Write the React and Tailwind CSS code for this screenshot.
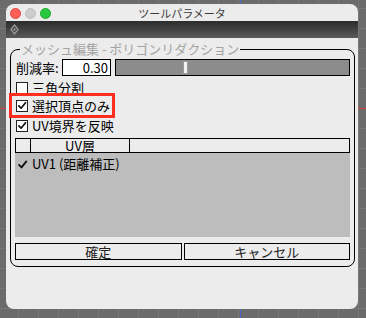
import React from "react";

const font = { fontFamily: '"Noto Sans CJK JP", "Noto Sans", sans-serif' };

const Check = ({ className = "" }) => (
  <svg viewBox="0 0 12 12" className={className}>
    <path d="M2.2 6.4 L4.9 9.2 L10.2 2.6" fill="none" stroke="#111" strokeWidth="2" strokeLinecap="round" strokeLinejoin="round" />
  </svg>
);

const CheckBox = ({ checked }) => (
  <div className="w-[12px] h-[12px] bg-white border border-[#222] flex items-center justify-center shrink-0">
    {checked && <Check className="w-[11px] h-[11px]" />}
  </div>
);

const CheckRow = ({ checked, label, className = "" }) => (
  <div className={`h-[17px] flex items-center gap-[4px] pl-[1px] ${className}`}>
    <CheckBox checked={checked} />
    <span className="text-[13px] leading-[17px] text-black">{label}</span>
  </div>
);

const App = () => {
  return (
    <div
      className="relative w-[366px] h-[318px] overflow-hidden bg-[#6b6b6b] bg-[linear-gradient(to_right,#777_1px,transparent_1px),linear-gradient(to_bottom,#777_1px,transparent_1px)] bg-[size:20px_20px] bg-[position:18px_8px] pt-[4px] pl-[6px]"
      style={font}
    >
      <div className="absolute left-0 top-[108px] w-full h-px bg-[#d04040]" />
      <div className="absolute top-0 left-[240px] h-full w-px bg-[#5060d0]" />

      <div className="relative w-[352px] h-[305px] rounded-[8px] bg-[#ececec] overflow-hidden flex flex-col">
        {/* title bar */}
        <div className="h-[17px] flex items-center relative">
          <div className="flex gap-[4px] pl-[4px] pt-[2px]">
            <div className="w-[11px] h-[11px] rounded-full bg-[#fe5f57] border border-[#e0443e]" />
            <div className="w-[11px] h-[11px] rounded-full bg-[#cdcdcd] border border-[#bdbdbd]" />
            <div className="w-[11px] h-[11px] rounded-full bg-[#28c840] border border-[#1aab29]" />
          </div>
          <div className="absolute inset-0 flex items-center justify-center pt-[2px] text-[11px] text-[#3a3a3a]">
            ツールパラメータ
          </div>
        </div>

        {/* dark toolbar */}
        <div className="h-[17px] bg-gradient-to-b from-[#2c2c2c] to-[#5a5a5a] flex items-center pl-[4px]">
          <svg viewBox="0 0 10 12" className="w-[9px] h-[11px]">
            <path d="M5 1 L9 6 L5 11 L1 6 Z" fill="none" stroke="#9a9a9a" strokeWidth="1.4" />
            <circle cx="5" cy="6" r="1.3" fill="#9a9a9a" />
          </svg>
        </div>

        {/* group */}
        <fieldset className="ml-[4px] mt-[3px] w-[345px] border-[1.5px] border-black rounded-[8px] px-[4px] pb-[6px]">
          <legend className="ml-[5px] px-[1px] text-[13px] leading-[16px] text-[#a3a3a3]">
            メッシュ編集 - ポリゴンリダクション
          </legend>

          <div className="mt-[2px] h-[17px] flex items-center">
            <span className="w-[47px] pl-[1px] text-[13px] text-black">削減率:</span>
            <div className="w-[49px] h-[17px] bg-white border border-black flex items-center justify-end pr-[2px] text-[13px] text-black">
              0.30
            </div>
            <div className="ml-[4px] flex-1 h-[17px] bg-[#8c8c8c] border border-black relative">
              <div className="absolute left-[67px] top-[1px] w-[5px] h-[13px] bg-[#f2f2f2] border border-[#9a9a9a] rounded-[1px]" />
            </div>
          </div>

          <CheckRow className="mt-[3px]" checked={false} label="三角分割" />

          <div className="relative mt-[1px]">
            <div className="absolute left-[-6px] top-[-4px] w-[106px] h-[25px] border-[3px] border-[#ff2d1f]" />
            <CheckRow checked label="選択頂点のみ" />
          </div>

          <CheckRow className="mt-[3px]" checked label="UV境界を反映" />

          <div className="mt-[4px] h-[15px] flex border border-black bg-[#ececec] text-[13px] leading-[13px] text-black">
            <div className="w-[15px] border-r border-black" />
            <div className="w-[99px] border-r border-black flex items-center justify-center">UV層</div>
            <div className="flex-1" />
          </div>

          <div className="h-[84px] bg-[#bdbdbd] pt-[3px]">
            <div className="h-[16px] flex items-center gap-[4px] pl-[2px]">
              <Check className="w-[11px] h-[11px]" />
              <span className="text-[13px] text-black">UV1 (距離補正)</span>
            </div>
          </div>

          <div className="mt-[6px] flex gap-[2px]">
            <button className="flex-1 h-[17px] border-[1.5px] border-black bg-[#ececec] text-[13px] leading-[13px] text-[#222]">
              確定
            </button>
            <button className="flex-1 h-[17px] border-[1.5px] border-black bg-[#ececec] text-[13px] leading-[13px] text-[#222]">
              キャンセル
            </button>
          </div>
        </fieldset>
      </div>
    </div>
  );
};

export default App;
